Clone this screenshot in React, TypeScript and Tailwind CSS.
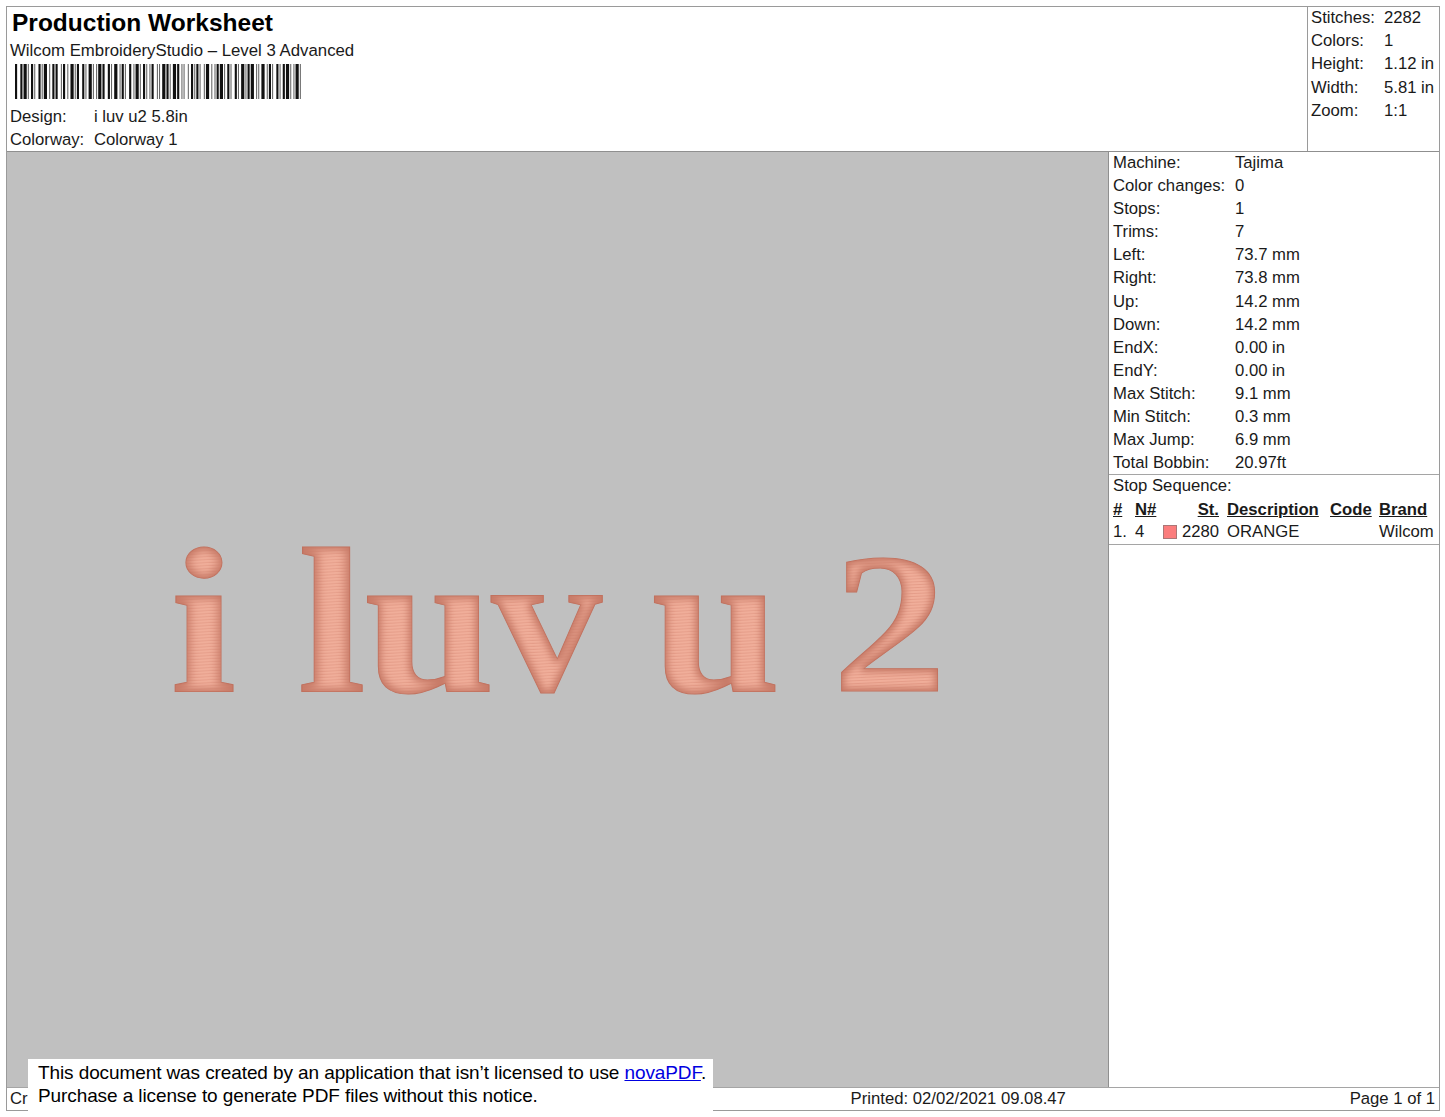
const stats = [
  ["Stitches:", "2282"],
  ["Colors:", "1"],
  ["Height:", "1.12 in"],
  ["Width:", "5.81 in"],
  ["Zoom:", "1:1"],
];

const details = [
  ["Machine:", "Tajima"],
  ["Color changes:", "0"],
  ["Stops:", "1"],
  ["Trims:", "7"],
  ["Left:", "73.7 mm"],
  ["Right:", "73.8 mm"],
  ["Up:", "14.2 mm"],
  ["Down:", "14.2 mm"],
  ["EndX:", "0.00 in"],
  ["EndY:", "0.00 in"],
  ["Max Stitch:", "9.1 mm"],
  ["Min Stitch:", "0.3 mm"],
  ["Max Jump:", "6.9 mm"],
  ["Total Bobbin:", "20.97ft"],
];

// bar, gap, bar, gap... in px
const barcodeWidths =
  "2 3 2 1 3 1 1 2 2 1 1 3 2 1 1 1 3 2 1 2 2 1 2 3 1 1 2 2 1 2 3 1 1 1 2 3 2 1 1 2 3 1 1 2 1 1 3 1 2 3 2 1 1 2 3 2 1 1 2 1 1 3 2 2 1 1 3 1 1 2 2 1 1 2 1 1 2 3 1 1 1 2 3 1 2 1 1 2 3 1 2 2 1 1 1 3 1 2 2 1 1 1 2 1 1 3 1 1 3 2 1 2 1 1 2 1 3 1 1 2 2 1 1 3 2 1 1 2 3 1 1 1 2 1 3 2 1 1 1 2 3 2 1 1 2 1 1 3 2 1 1 2 2 1 3 1 1 2 1 1 3 1 1 2"
    .split(" ")
    .map(Number);

function Barcode() {
  let x = 0;
  const bars = barcodeWidths.map((w, i) => {
    const at = x;
    x += w;
    if (i % 2 === 1) return null;
    return <rect key={i} x={at} y={0} width={w} height={35} fill={w === 1 ? "#666" : "#111"} />;
  });
  return (
    <svg viewBox={`0 0 ${x} 35`} preserveAspectRatio="none" className="ml-[5px] mt-[3px] block h-[35px] w-[288px]">
      {bars}
    </svg>
  );
}

const glyphs = [
  { c: "i", x: 170, sx: 1.15, sy: 1 },
  { c: "l", x: 297, sx: 1.2, sy: 1 },
  { c: "u", x: 364, sx: 1.135, sy: 1 },
  { c: "v", x: 491, sx: 1.07, sy: 1 },
  { c: "u", x: 651, sx: 1.125, sy: 1 },
  { c: "2", x: 832, sx: 1.11, sy: 0.97 },
];

function Artwork() {
  return (
    <svg viewBox="7 152 1101 935" className="block h-full w-full">
      <defs>
        <pattern id="stitch" width="5" height="3" patternUnits="userSpaceOnUse" patternTransform="rotate(-3)">
          <rect width="5" height="3" fill="#f0ae9a" />
          <rect y="2" width="5" height="1" fill="#e59d89" />
        </pattern>
        <filter id="inner" x="-10%" y="-10%" width="120%" height="120%">
          <feMorphology in="SourceAlpha" operator="erode" radius="3" result="core" />
          <feGaussianBlur in="core" stdDeviation="3.5" result="soft" />
          <feComposite in="SourceGraphic" in2="soft" operator="in" />
        </filter>
      </defs>
      {glyphs.map((g, i) => (
        <g
          key={i}
          transform={`translate(${g.x} 691) scale(${g.sx} ${g.sy})`}
          fontFamily="'Liberation Serif', serif"
          fontWeight="700"
          fontSize="208"
        >
          <text fill="#c77a67" stroke="#c0705d" strokeWidth="1">
            {g.c}
          </text>
          <text fill="url(#stitch)" filter="url(#inner)" aria-hidden="true">
            {g.c}
          </text>
        </g>
      ))}
    </svg>
  );
}

export default function App() {
  return (
    <div className="relative h-[1117px] w-[1445px] overflow-hidden bg-white font-['Liberation_Sans',Arial,sans-serif] text-[16.7px] leading-[23.1px] text-[#1a1a1a]">
      <div className="ml-[6px] mt-[6px] flex h-[1105px] w-[1434px] flex-col border border-[#9a9a9a]">
        <header className="flex h-[145px] shrink-0 border-b border-[#8f8f8f]">
          <div className="flex-1 pl-[3px]">
            <h1 className="ml-[2px] mt-[2px] text-[24.5px] font-bold leading-[28px] text-black">Production Worksheet</h1>
            <p className="mt-[4px] text-[16.8px] leading-[20px]">Wilcom EmbroideryStudio – Level 3 Advanced</p>
            <Barcode />
            <div className="mt-[6px] flex">
              <span className="w-[84px]">Design:</span>
              <span>i luv u2 5.8in</span>
            </div>
            <div className="flex">
              <span className="w-[84px]">Colorway:</span>
              <span>Colorway 1</span>
            </div>
          </div>
          <div className="w-[132px] border-l border-[#9a9a9a] pl-[3px] leading-[23.2px]">
            {stats.map(([k, v], i) => (
              <div key={k} className={i === 0 ? "-mt-px flex" : "flex"}>
                <span className="w-[73px]">{k}</span>
                <span>{v}</span>
              </div>
            ))}
          </div>
        </header>

        <div className="flex min-h-0 flex-1">
          <div className="w-[1102px] shrink-0 border-r border-[#8f8f8f] bg-[#c0c0c0]">
            <Artwork />
          </div>
          <aside className="flex flex-1 flex-col">
            <div className="h-[323px] shrink-0 border-b border-[#a5a5a5] pl-[4px]">
              {details.map(([k, v], i) => (
                <div key={k} className={i === 0 ? "-mt-px flex" : "flex"}>
                  <span className="w-[122px]">{k}</span>
                  <span>{v}</span>
                </div>
              ))}
            </div>
            <div className="h-[70px] shrink-0 border-b border-[#a5a5a5] pl-[4px]">
              <div className="-mt-px">Stop Sequence:</div>
              <div className="mt-[1px] flex font-bold underline">
                <span className="w-[22px]">#</span>
                <span className="w-[60px]">N#</span>
                <span className="w-[24px] text-right">St.</span>
                <span className="ml-[8px] w-[103px]">Description</span>
                <span className="w-[49px]">Code</span>
                <span>Brand</span>
              </div>
              <div className="-mt-px flex items-center">
                <span className="w-[22px]">1.</span>
                <span className="w-[28px]">4</span>
                <span className="h-[14px] w-[14px] border border-[#a77] bg-[#fb7d7d]" />
                <span className="ml-[5px] w-[37px] text-right">2280</span>
                <span className="ml-[8px] w-[152px]">ORANGE</span>
                <span>Wilcom</span>
              </div>
            </div>
          </aside>
        </div>

        <footer className="relative flex h-[23px] shrink-0 items-center border-t border-[#a5a5a5] pl-[3px]">
          <span>Cr</span>
          <span className="ml-[823px]">Printed: 02/02/2021 09.08.47</span>
          <span className="ml-auto pr-[4px]">Page 1 of 1</span>
        </footer>
      </div>

      <div className="absolute left-[28px] top-[1059px] h-[52px] w-[685px] whitespace-nowrap bg-white pl-[10px] text-[19px] leading-[22.5px] tracking-[-0.1px] text-black">
        <p className="pt-[3px]">
          This document was created by an application that isn’t licensed to use{" "}
          <span className="text-[#0000e0] underline">novaPDF</span>.
        </p>
        <p>Purchase a license to generate PDF files without this notice.</p>
      </div>
    </div>
  );
}
